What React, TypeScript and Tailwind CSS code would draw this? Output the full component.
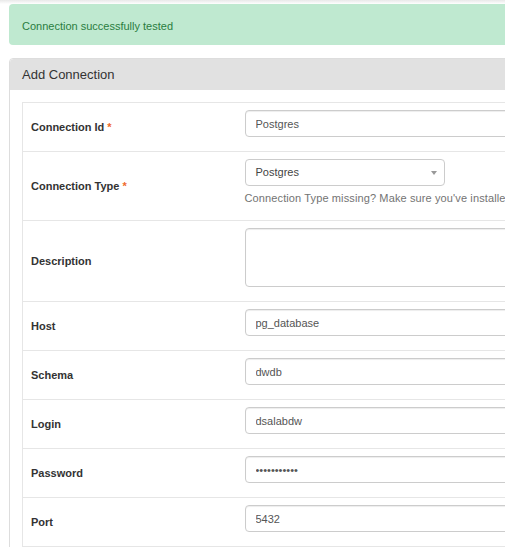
import React from 'react';

type Field = {
  label: string;
  value: string;
  required?: boolean;
  type?: 'text' | 'password';
};

const fields: Field[] = [
  { label: 'Host', value: 'pg_database' },
  { label: 'Schema', value: 'dwdb' },
  { label: 'Login', value: 'dsalabdw' },
  { label: 'Password', value: 'xxxxxxxxxxx', type: 'password' },
  { label: 'Port', value: '5432' },
];

const inputClass =
  'block w-full h-[27px] rounded-[4px] border border-[#cccccc] bg-white px-[10px] text-[11px] text-[#555555] shadow-[inset_0_1px_1px_rgba(0,0,0,0.075)] outline-none';

const Label: React.FC<{ text: string; required?: boolean }> = ({ text, required }) => (
  <td className="w-[214px] px-2 align-middle text-[11px] font-bold text-[#333333]">
    {text}
    {required && <span className="ml-[3px] text-[#ef6a2c]">*</span>}
  </td>
);

export default function App() {
  return (
    <div
      className="relative h-[547px] w-full overflow-hidden bg-white"
      style={{ fontFamily: '"Liberation Sans", Arial, sans-serif' }}
    >
      <div className="h-1 bg-gradient-to-b from-[#e9e9e9] to-white" />
      <div className="w-[900px] pl-[9px]">
        {/* alert */}
        <div className="flex h-[41px] items-center rounded-[4px] bg-[#bfe9d0] px-[13px] pt-[3px] text-[11px] text-[#2a7d3f]">
          Connection successfully tested
        </div>

        {/* panel */}
        <div className="mt-[13px] rounded-[4px] border border-[#dddddd] bg-white">
          <div className="flex h-[31px] items-center rounded-t-[4px] bg-[#e1e1e1] px-3 text-[13px] text-[#333333]">
            Add Connection
          </div>
          <div className="p-3">
            <table className="w-full border-collapse border-l border-t border-[#e6e6e6]">
              <tbody>
                <tr className="border-b border-[#e6e6e6]">
                  <Label text="Connection Id" required />
                  <td className="px-2 pb-[14px] pt-[7px]">
                    <input className={inputClass} readOnly value="Postgres" />
                  </td>
                </tr>
                <tr className="border-b border-[#e6e6e6]">
                  <Label text="Connection Type" required />
                  <td className="px-2 pb-[14px] pt-[7px]">
                    <div className="relative flex h-[27px] w-[200px] items-center rounded-[4px] border border-[#cccccc] bg-white px-[10px] text-[11px] text-[#444444]">
                      Postgres
                      <span className="absolute right-[7px] top-[11px] h-0 w-0 border-x-[3px] border-t-[4px] border-x-transparent border-t-[#999999]" />
                    </div>
                    <div className="mt-[5px] whitespace-nowrap text-[11px] leading-[15px] tracking-[0.12px] text-[#737373]">
                      Connection Type missing? Make sure you've installed the corresponding Airflow Provider Package.
                    </div>
                  </td>
                </tr>
                <tr className="border-b border-[#e6e6e6]">
                  <Label text="Description" />
                  <td className="px-2 pb-[14px] pt-[7px]">
                    <textarea
                      className="block h-[59px] w-full resize-none rounded-[4px] border border-[#cccccc] bg-white px-[10px] text-[11px] text-[#555555] shadow-[inset_0_1px_1px_rgba(0,0,0,0.075)] outline-none"
                      readOnly
                      value=""
                    />
                  </td>
                </tr>
                {fields.map((f) => (
                  <tr key={f.label} className="border-b border-[#e6e6e6]">
                    <Label text={f.label} required={f.required} />
                    <td className="px-2 pb-[14px] pt-[7px]">
                      <input className={inputClass} type={f.type ?? 'text'} readOnly value={f.value} />
                    </td>
                  </tr>
                ))}
              </tbody>
            </table>
          </div>
        </div>
      </div>
    </div>
  );
}
